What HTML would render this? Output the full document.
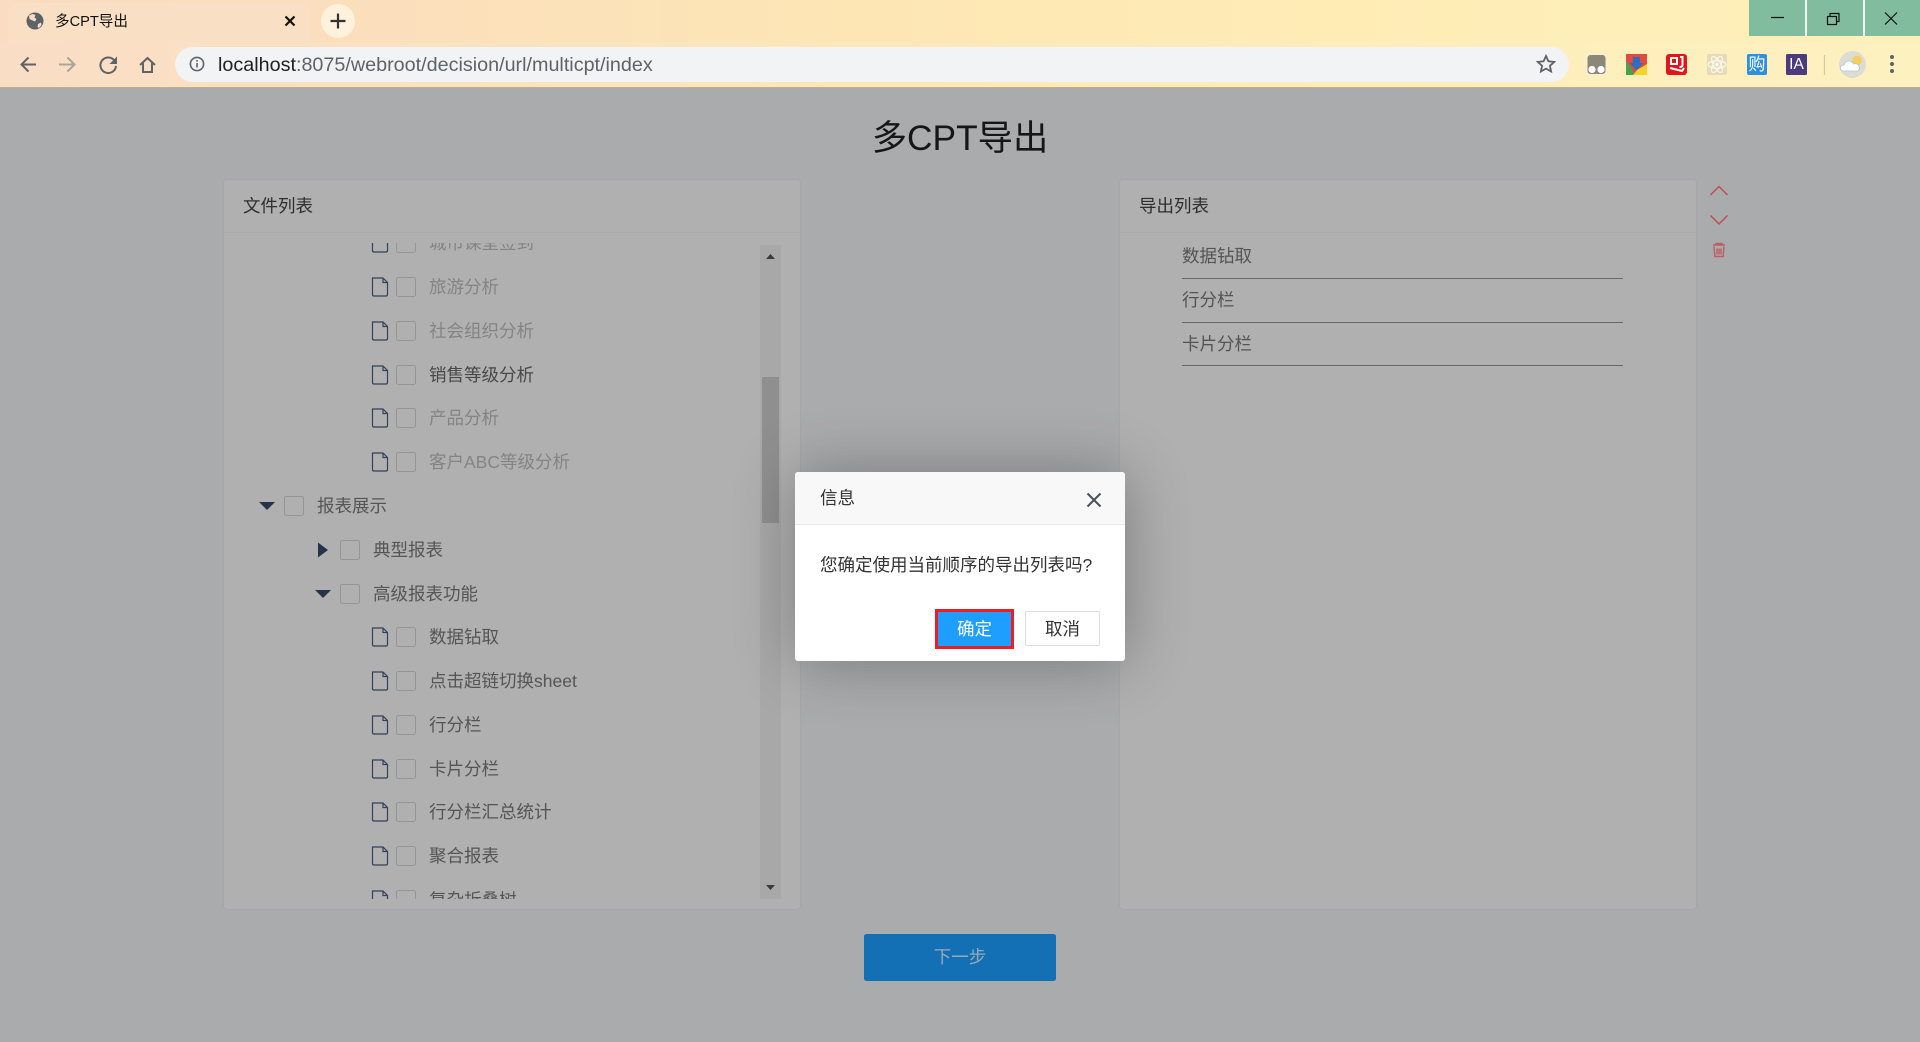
<!DOCTYPE html>
<html lang="zh"><head><meta charset="utf-8"><title>多CPT导出</title>
<style>
html,body{margin:0;padding:0;width:1920px;height:1042px;overflow:hidden;background:#aaabad;font-family:"Liberation Sans","Noto Sans CJK SC",sans-serif;}
div,span,i{position:absolute;display:block;white-space:nowrap;font-style:normal}
.top{left:0;top:0;width:1920px;height:87px;background:linear-gradient(90deg,#f9dcc1 0,#fbdfbc 20%,#fde6b4 45%,#ffecb5 70%,#fdf0bb 100%);border-bottom:2px solid #bfae88}
.bar{left:0;top:42px;width:1920px;height:45px;background:rgba(255,255,255,.08)}
.tab{left:8px;top:3px;width:302px;height:39px;background:#f9dfc4;border-radius:10px 10px 0 0}
.url{left:175px;top:47px;width:1394px;height:35px;border-radius:18px;background:#f1f3f4}
.urlt{left:218px;top:53px;font-size:19.75px;line-height:25px;color:#5f6368}
.urlt b{font-weight:normal;color:#202124}
.win{left:1749px;top:0;width:171px;height:36px;background:#82bc9f}
.sep{top:0;width:1.5px;height:36px;background:#eef6ef}
.panel{background:#b0b0b0;border-radius:3px;box-shadow:0 0 2px rgba(0,0,0,.06)}
.hline{height:1px;background:#a9a9a9}
.ph{font-size:17.5px;line-height:26px;color:#2e2e2e}
.tree{left:224px;top:243px;width:536px;height:656px;overflow:hidden}
.r{height:43.75px;line-height:43.75px;font-size:17.5px;color:#555;width:400px}
.r.g{color:#848484}.r.k{color:#484848}
.r svg{position:absolute;left:0;top:12px}
.r i{left:25px;top:12px;width:18px;height:18px;border:1px solid #959595;border-radius:2.5px}
.r span{left:58px;top:1px}
.item{left:1182px;width:441px;font-size:17.5px;line-height:26px;color:#545454}
.ln{left:1182px;width:441px;height:1.4px;background:#696969}
.shadow{left:795px;top:472px;width:330px;height:189px;background:#fff;border-radius:3px;box-shadow:1px 1px 62px rgba(0,0,0,.3)}
.dh{left:0;top:0;width:330px;height:52px;background:#f8f8f8;border-bottom:1px solid #e9e9e9;border-radius:3px 3px 0 0}
</style></head><body>

<div class="top"></div><div class="bar"></div><div class="tab"></div>
<div class="url"></div>
<div style="left:55px;top:11px;font-size:14.6px;line-height:22px;color:#111">多CPT导出</div>
<div class="urlt"><b>localhost</b>:8075/webroot/decision/url/multicpt/index</div>
<div class="win"></div><div class="sep" style="left:1805px"></div><div class="sep" style="left:1863px"></div>

<svg style="position:absolute;left:0;top:0" width="1920" height="90" viewBox="0 0 1920 90">
 <circle cx="35" cy="21" r="8.5" fill="#5f6368"/>
 <path d="M29 15.5l3.5-1.5 3 1-1 2.5 2 1.5-1.5 2.5-2.5-1-3-1.5zM38 24l3-1.5 0.5 2.5-2.5 3-1.5-1z" fill="#f6dcc0"/>
 <path d="M285.5 16.5l9 9M294.5 16.5l-9 9" stroke="#111" stroke-width="2.2"/>
 <circle cx="338" cy="21" r="17" fill="#fff1dc"/>
 <path d="M338 13.5v15M330.5 21h15" stroke="#333" stroke-width="2.2"/>
 <g fill="none" stroke="#5f6368" stroke-width="2">
  <path d="M36 64.5H21.5M28.5 57.5l-7 7 7 7"/>
  <path d="M59 64.5h15.5M67.5 57.5l7 7-7 7" stroke="#aaa697"/>
  <path d="M114 60a7.8 7.8 0 1 0 2 6"/>
  <path d="M140 65l7.5-7 7.5 7M143 63v9h9v-9"/>
 </g>
 <path d="M117 56.5v7.5h-7.5z" fill="#5f6368"/>
 <circle cx="197" cy="64" r="6.6" fill="none" stroke="#5f6368" stroke-width="1.6"/>
 <path d="M197 63v4.5M197 60v1.6" stroke="#5f6368" stroke-width="1.6"/>
 <path d="M1546 56l2.4 5.3 5.8.6-4.3 3.9 1.2 5.7-5.1-2.9-5.1 2.9 1.2-5.7-4.3-3.9 5.8-.6z" fill="none" stroke="#5f6368" stroke-width="1.8"/>
 <path d="M1771 17.5h13" stroke="#111" stroke-width="1.2"/>
 <g fill="none" stroke="#111" stroke-width="1.2"><rect x="1827.5" y="16.5" width="9" height="8"/><path d="M1830 16.5v-3h9v8h-2.5"/><path d="M1885 12.5l12 12M1897 12.5l-12 12"/></g>
 <rect x="1587" y="54.5" width="19" height="20" rx="3.5" fill="#8c8877" stroke="#f2efdc"/>
 <circle cx="1592" cy="69.5" r="3.6" fill="#fff"/><circle cx="1601" cy="69.5" r="3.6" fill="#fff"/>
 <rect x="1626" y="54" width="21" height="21" fill="#e24a3f"/>
 <path d="M1626 60l9 15h-9z" fill="#3fa64a"/><path d="M1647 64v11h-14l4-5z" fill="#f5d329"/>
 <path d="M1633 57h7v6h3.5l-7 7.5-7-7.5h3.5z" fill="#2a6fc0"/>
 <rect x="1666" y="54" width="21" height="21" rx="3" fill="#e0161c"/>
 <path d="M1671 58h6v6h-6zM1680 57h2.5v8q0 2-3 2M1670 68l12 3 2-3" fill="none" stroke="#fff" stroke-width="2"/>
 <rect x="1707" y="54" width="20" height="21" rx="2" fill="#e5dbb9"/>
 <g fill="none" stroke="#fbf8ea" stroke-width="1.2"><ellipse cx="1717" cy="64.5" rx="9" ry="3.6"/><ellipse cx="1717" cy="64.5" rx="9" ry="3.6" transform="rotate(60 1717 64.5)"/><ellipse cx="1717" cy="64.5" rx="9" ry="3.6" transform="rotate(120 1717 64.5)"/></g>
 <circle cx="1717" cy="64.5" r="1.8" fill="#fbf8ea"/>
 <rect x="1747" y="54" width="20" height="21" rx="2" fill="#2d8fe0"/>
 <rect x="1786" y="54" width="21" height="21" rx="1.5" fill="#4a3a80"/>
 <path d="M1824.5 55v20" stroke="#d4c9a0" stroke-width="1.2"/>
 <circle cx="1852.5" cy="64.5" r="13.5" fill="#dcdcd3"/>
 <circle cx="1857" cy="60.5" r="4.8" fill="#f5cf58"/>
 <path d="M1843 71q-3-1-2.500-3.500t3.500-2.500q1-4 5-4 3 0 4.500 3 4-1 5.500 2t-1 5z" fill="#fff" stroke="#a9c4e2" stroke-width=".8"/>
 <circle cx="1892" cy="57" r="2" fill="#5f6368"/><circle cx="1892" cy="64" r="2" fill="#5f6368"/><circle cx="1892" cy="71" r="2" fill="#5f6368"/>
</svg>
<div style="left:1747px;top:54px;width:20px;text-align:center;font-size:17px;line-height:21px;color:#fff">购</div>
<div style="left:1786px;top:54px;width:21px;text-align:center;font-size:15.5px;line-height:21px;color:#fff">IA</div>

<div style="left:0;top:88px;width:1920px;height:954px;background:#aaabad"></div>
<div style="left:0;width:1920px;text-align:center;top:115px;font-size:35.3px;line-height:48px;color:#161616">多CPT导出</div>

<!-- left panel -->
<div class="panel" style="left:224px;top:180px;width:576px;height:729px"></div>
<div class="hline" style="left:224px;top:232px;width:576px"></div>
<div class="ph" style="left:243px;top:193px">文件列表</div>

<svg width="0" height="0" style="position:absolute"><defs><symbol id="f" viewBox="0 0 18 20"><path d="M1.500 1h10.500l4.500 4.500v12q0 1.500-1.500 1.500H3q-1.500 0-1.500-1.500zM12 1v4.500h4.500" fill="none" stroke="#33415a" stroke-width="1.200"/></symbol></defs></svg>

<div class="tree">
 <div class="r g" style="left:147px;top:-21.625px"><svg width="18" height="20"><use href="#f"/></svg><i></i><span>城市课堂签到</span></div>
 <div class="r g" style="left:147px;top:22.125px"><svg width="18" height="20"><use href="#f"/></svg><i></i><span>旅游分析</span></div>
 <div class="r g" style="left:147px;top:65.875px"><svg width="18" height="20"><use href="#f"/></svg><i></i><span>社会组织分析</span></div>
 <div class="r k" style="left:147px;top:109.625px"><svg width="18" height="20"><use href="#f"/></svg><i></i><span>销售等级分析</span></div>
 <div class="r g" style="left:147px;top:153.375px"><svg width="18" height="20"><use href="#f"/></svg><i></i><span>产品分析</span></div>
 <div class="r g" style="left:147px;top:197.125px"><svg width="18" height="20"><use href="#f"/></svg><i></i><span>客户ABC等级分析</span></div>
 <div class="r" style="left:35px;top:240.875px"><svg width="16" height="20"><path d="M0 6h16l-8 8z" fill="#26324a"/></svg><i></i><span>报表展示</span></div>
 <div class="r" style="left:91px;top:284.625px"><svg width="16" height="20"><path d="M3 2.500l10 7.500-10 7.500z" fill="#26324a"/></svg><i></i><span>典型报表</span></div>
 <div class="r" style="left:91px;top:328.500px"><svg width="16" height="20"><path d="M0 6h16l-8 8z" fill="#26324a"/></svg><i></i><span>高级报表功能</span></div>
 <div class="r" style="left:147px;top:372.125px"><svg width="18" height="20"><use href="#f"/></svg><i></i><span>数据钻取</span></div>
 <div class="r" style="left:147px;top:415.875px"><svg width="18" height="20"><use href="#f"/></svg><i></i><span>点击超链切换sheet</span></div>
 <div class="r" style="left:147px;top:459.625px"><svg width="18" height="20"><use href="#f"/></svg><i></i><span>行分栏</span></div>
 <div class="r" style="left:147px;top:503.500px"><svg width="18" height="20"><use href="#f"/></svg><i></i><span>卡片分栏</span></div>
 <div class="r" style="left:147px;top:547.125px"><svg width="18" height="20"><use href="#f"/></svg><i></i><span>行分栏汇总统计</span></div>
 <div class="r" style="left:147px;top:590.875px"><svg width="18" height="20"><use href="#f"/></svg><i></i><span>聚合报表</span></div>
 <div class="r" style="left:147px;top:634.625px"><svg width="18" height="20"><use href="#f"/></svg><i></i><span>复杂折叠树</span></div>
</div>

<!-- scrollbar -->
<div style="left:760px;top:245px;width:21px;height:654px;background:#a8a8a8"></div>
<div style="left:762px;top:377px;width:17px;height:146px;background:#8f8f8f"></div>
<svg style="position:absolute;left:760px;top:245px" width="21" height="654"><path d="M6 14h9l-4.500-5zM6 640h9l-4.500 5z" fill="#3c3c3c"/></svg>

<!-- right panel -->
<div class="panel" style="left:1120px;top:180px;width:576px;height:729px"></div>
<div class="hline" style="left:1120px;top:232px;width:576px"></div>
<div class="ph" style="left:1139px;top:193px">导出列表</div>
<div class="item" style="top:243px">数据钻取</div><div class="ln" style="top:278px"></div>
<div class="item" style="top:287px">行分栏</div><div class="ln" style="top:322px"></div>
<div class="item" style="top:331px">卡片分栏</div><div class="ln" style="top:365px"></div>
<svg style="position:absolute;left:1705px;top:180px" width="30" height="85" viewBox="0 0 30 85" fill="none" stroke="#bb5055">
 <path d="M5.500 15l8.500-8.500 8.500 8.500" stroke-width="1.500"/>
 <path d="M5.500 35.500l8.500 8.500 8.500-8.500" stroke-width="1.500"/>
 <path d="M8 65h12M11 65v-1.500h6V65M9 66.500l.8 10h8.400l.8-10M12 68.500v6M14 68.500v6M16 68.500v6" stroke="#bd5c61" stroke-width="1.400"/>
</svg>

<!-- next -->
<div style="left:864px;top:934px;width:192px;height:47px;background:#1470b4;border-radius:2.500px;text-align:center;font-size:17.500px;line-height:46px;color:#9aa9b6">下一步</div>

<!-- dialog -->
<div class="shadow">
 <div class="dh"></div>
 <div style="left:25px;top:13px;font-size:17.500px;line-height:26px;color:#333">信息</div>
 <svg style="position:absolute;left:291px;top:20px" width="16" height="16"><path d="M1.500 1.500l13 13M14.500 1.500l-13 13" stroke="#4a4f5c" stroke-width="2"/></svg>
 <div style="left:25px;top:80px;font-size:17.500px;line-height:26px;color:#333">您确定使用当前顺序的导出列表吗?</div>
 <div style="left:140px;top:137px;width:73px;height:34px;border:3px solid #ee1c25;background:#1e9fff;color:#fff;text-align:center;font-size:17.500px;line-height:34px">确定</div>
 <div style="left:230px;top:139px;width:73px;height:33px;border:1px solid #dedede;border-radius:2px;background:#fff;color:#333;text-align:center;font-size:17.500px;line-height:34px">取消</div>
</div>
</body></html>
